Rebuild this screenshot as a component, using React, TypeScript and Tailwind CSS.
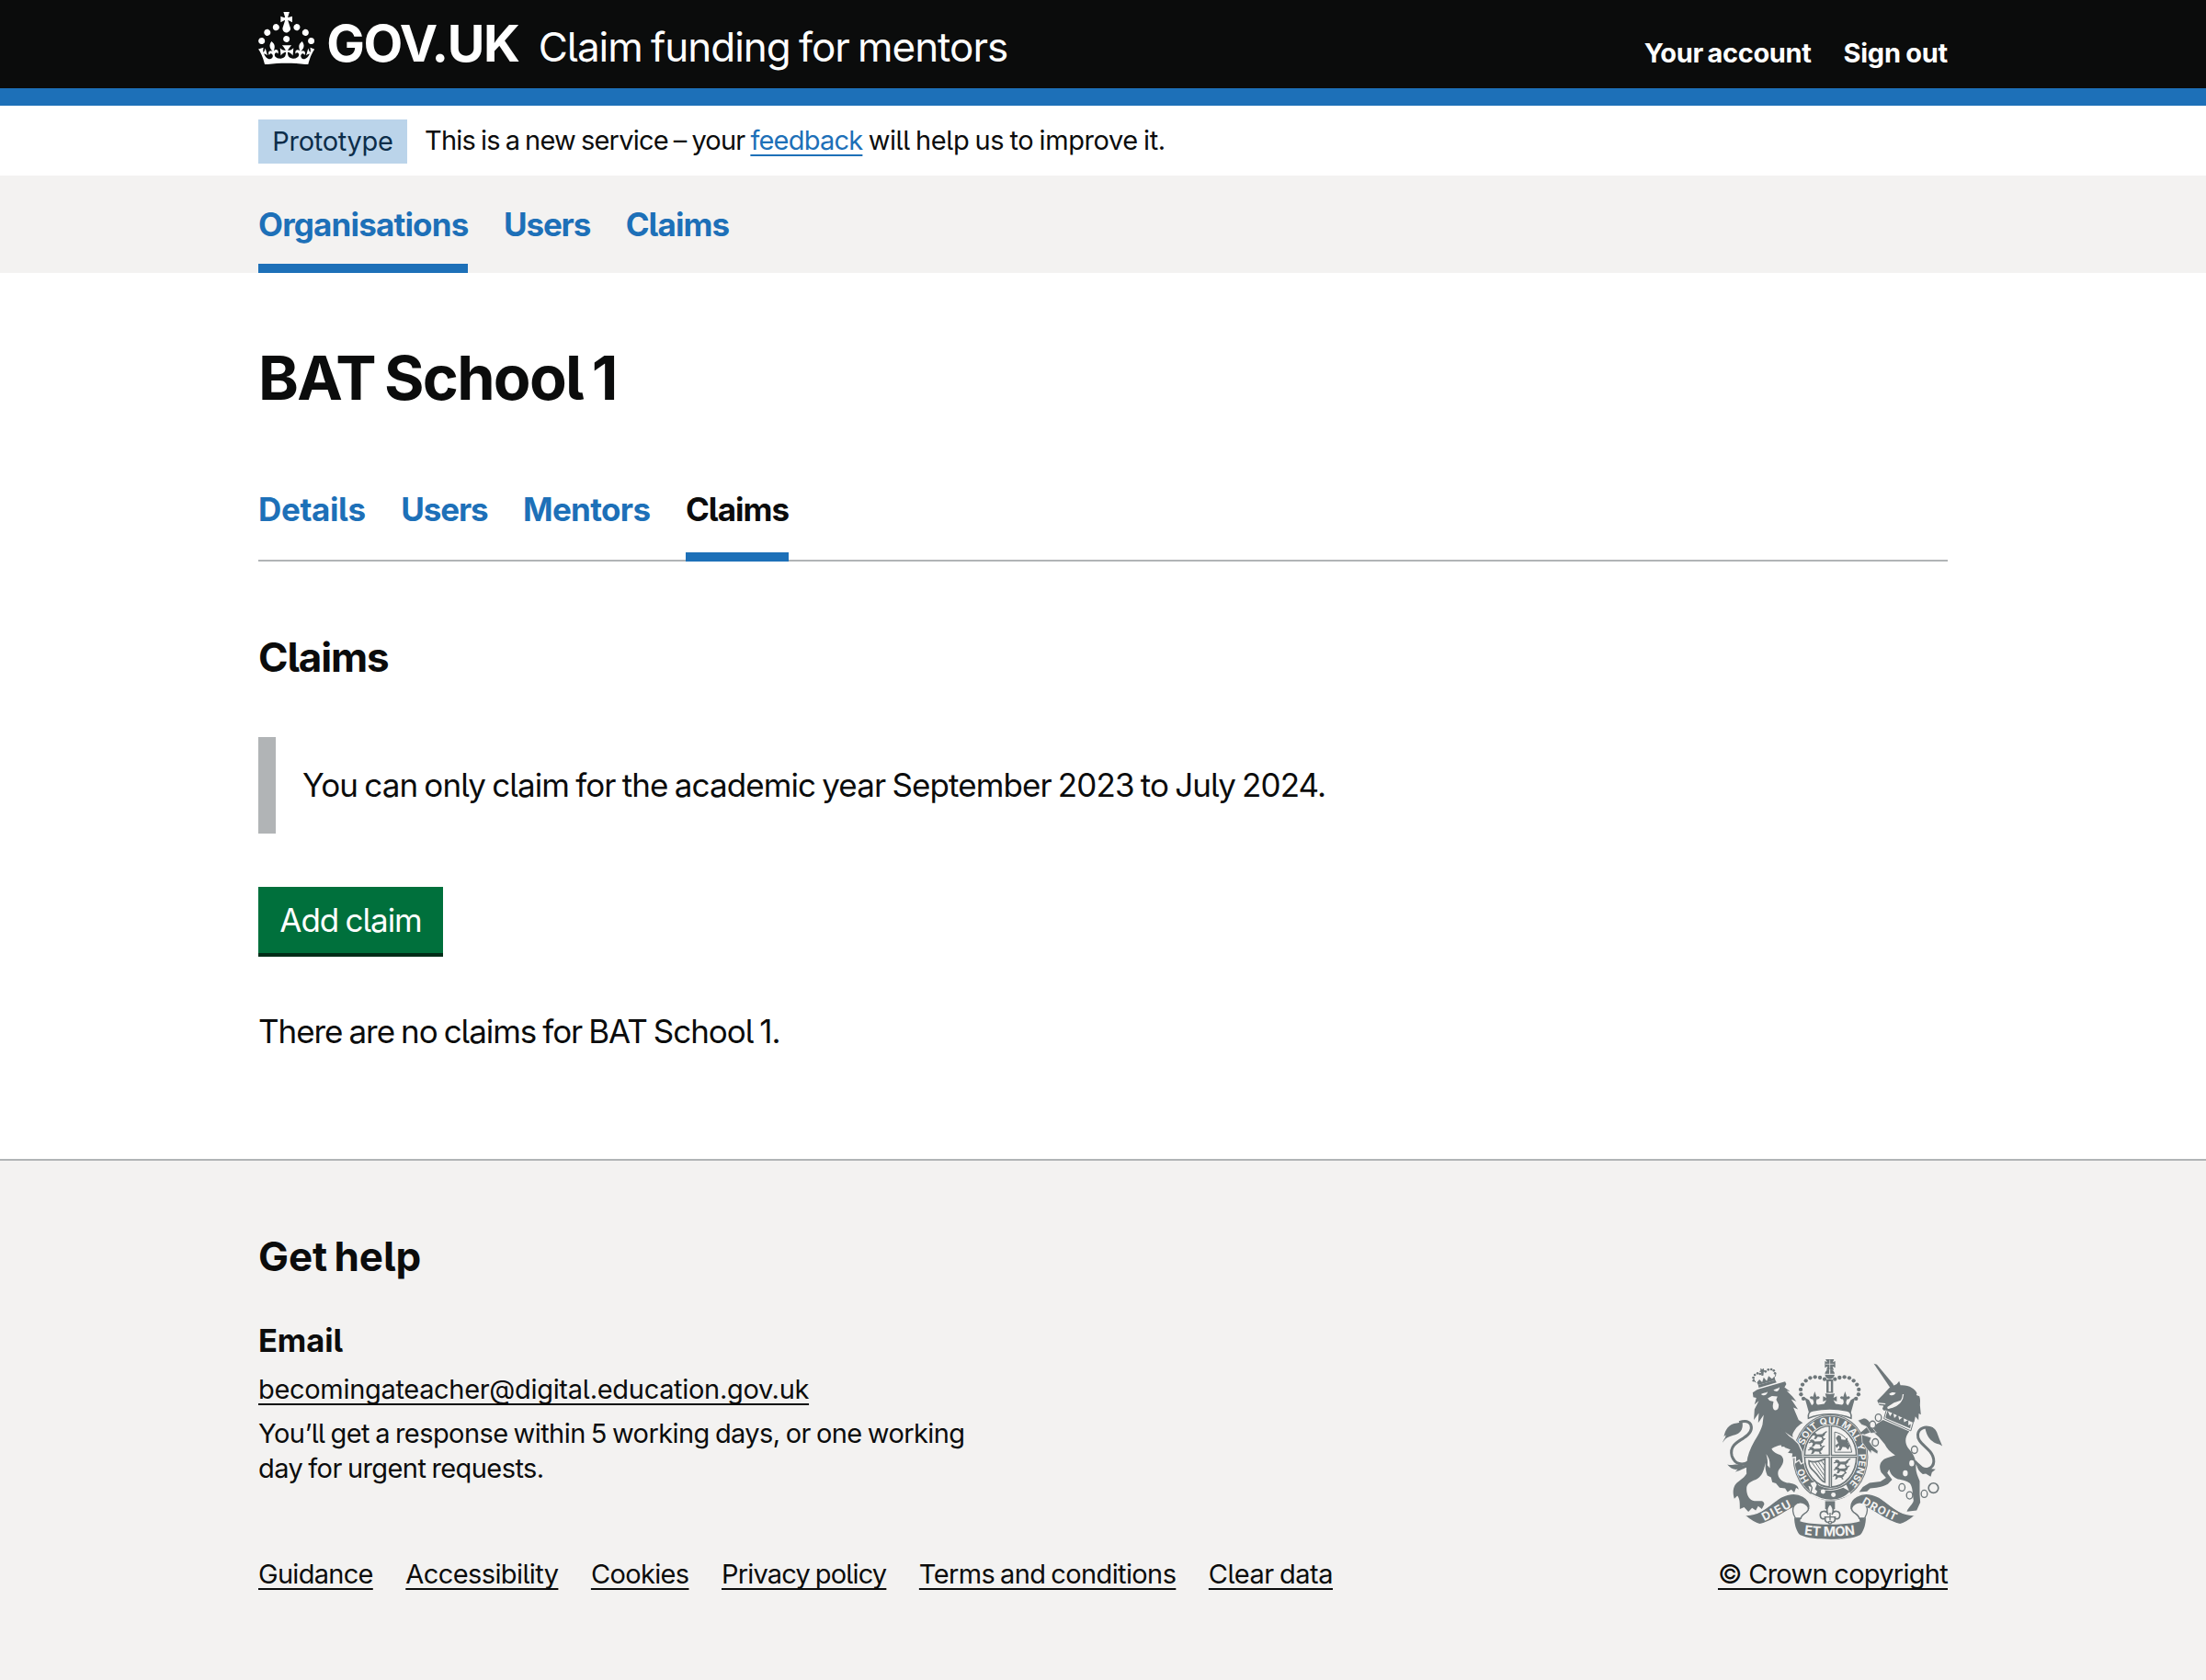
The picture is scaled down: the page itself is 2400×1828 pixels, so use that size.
import React from 'react';

const font = "font-['Inter','Liberation_Sans',sans-serif] [font-feature-settings:'cv05'_1]";
const underline = 'underline decoration-2 underline-offset-[5px] [text-decoration-skip-ink:none]';

function Crown() {
  return (
    <svg viewBox="0 0 32 30" className="h-[57.4px] w-[61.3px] shrink-0" fill="currentColor" aria-hidden="true">
      <path d="M22.6 10.4c-1 .4-2-.1-2.4-1-.4-.9.1-2 1-2.4.9-.4 2 .1 2.4 1s-.1 2-1 2.4m-5.9 6.7c-.9.4-2-.1-2.4-1-.4-.9.1-2 1-2.4.9-.4 2 .1 2.4 1s-.1 2-1 2.4m10.8-3.7c-1 .4-2-.1-2.4-1-.4-.9.1-2 1-2.4.9-.4 2 .1 2.4 1s0 2-1 2.4m3.3 4.8c-1 .4-2-.1-2.4-1-.4-.9.1-2 1-2.4.9-.4 2 .1 2.4 1s-.1 2-1 2.4M17 4.7l2.3 1.2V2.5l-2.3.7-.2-.2.9-3h-3.4l.9 3-.2.2c-.1.1-2.3-.7-2.3-.7v3.4L15 4.7c.1.1.1.2.2.2l-1.3 4c-.1.2-.1.4-.1.6 0 1.1.8 2 1.9 2.2h.7c1-.2 1.9-1.1 1.9-2.1 0-.2 0-.4-.1-.6l-1.3-4c-.1-.2 0-.2.1-.3m-7.6 5.7c.9.4 2-.1 2.4-1 .4-.9-.1-2-1-2.4-.9-.4-2 .1-2.4 1s0 2 1 2.4m-5 3c.9.4 2-.1 2.4-1 .4-.9-.1-2-1-2.4-.9-.4-2 .1-2.4 1s.1 2 1 2.4m-3.2 4.8c.9.4 2-.1 2.4-1 .4-.9-.1-2-1-2.4-.9-.4-2 .1-2.4 1s0 2 1 2.4m14.8 11c4.4 0 8.6.3 12.3.8 1.1-4.5 2.4-7 3.7-8.8l-2.5-.9c.2 1.3.3 1.9 0 2.7-.4-.4-.8-1.1-1.1-2.3l-1.2 4c.7-.5 1.3-.8 2-.9-1.1 2.5-2.6 3.1-3.5 3-1.1-.2-1.7-1.2-1.5-2.1.3-1.2 1.5-1.5 2.1-.1 1.1-2.3-.8-3-2-2.3 1.9-1.9 2.1-3.5.6-5.6-2.1 1.6-2.1 3.2-1.2 5.5-1.2-1.4-3.2-.6-2.5 1.6.9-1.4 2.1-.5 1.9.8-.2 1.1-1.7 2.1-3.5 1.9-2.7-.2-2.9-2.1-2.9-3.6.7-.1 1.9.5 2.9 1.9l.4-4.3c-1.1 1.1-2.1 1.4-3.2 1.4.4-1.2 2.1-3 2.1-3h-5.4s1.7 1.9 2.1 3c-1.1 0-2.1-.2-3.2-1.4l.4 4.3c1-1.4 2.2-2 2.9-1.9-.1 1.5-.2 3.4-2.9 3.6-1.9.2-3.4-.8-3.5-1.9-.2-1.3 1-2.2 1.9-.8.7-2.3-1.2-3-2.5-1.6.9-2.2.9-3.9-1.2-5.5-1.5 2-1.3 3.7.6 5.6-1.2-.7-3.1 0-2 2.3.6-1.4 1.8-1.1 2.1.1.2.9-.3 1.9-1.5 2.1-.9.2-2.4-.5-3.5-3 .6 0 1.2.3 2 .9l-1.2-4c-.3 1.1-.7 1.9-1.1 2.3-.3-.8-.2-1.4 0-2.7l-2.9.9C1.3 23 2.6 25.5 3.7 30c3.7-.5 7.9-.8 12.3-.8" />
    </svg>
  );
}

const INK = '#6e777a';
const PAPER = '#f3f2f1';

const archDots: [number, number][] = [
  [405, 123], [390, 118], [374, 116], [358, 119], [344, 128], [333, 141], [327, 157], [328, 173], [336, 187],
];

function Passant({ y }: { y: number }) {
  return (
    <g transform={`translate(0 ${y})`}>
      <path d="M2 6l6-5 7 2 4 5 18-1 8-6 4-3 3 3-4 3-3 8-6 4 5 8-7 1-2-7-13-2-6 8-8 1 3-5 2-7-5-2-7 3-3-3 7-3z" />
      <path d="M40 6c6-2 8-8 14-7" fill="none" stroke={INK} strokeWidth="3" />
    </g>
  );
}

function CoatOfArms({ className }: { className: string }) {
  return (
    <svg viewBox="57 55 750 595" className={className} fill={INK} aria-hidden="true">
      <defs>
        <path id="motto-ring" d="M373 473A93 111 0 1 1 476 473" />
        <path id="motto-left" d="M208 588L300 540" />
        <path id="motto-mid" d="M338 631Q424 643 510 630" />
        <path id="motto-right" d="M525 530Q560 552 646 592" />
      </defs>

      {/* lion */}
      <path d="M188 142l56-16 4 8-58 17z" />
      <path d="M184 134l8-10 9 9 5-16 10 12 6-16 11 9 8-8 3 12-56 16z" />
      <path d="M180 134c-6-6-8-12-6-18M242 116c4-4 4-10 0-16" fill="none" stroke={INK} strokeWidth="3" />
      {[[173, 128], [172, 118], [177, 109], [186, 104], [194, 106], [212, 98], [221, 92], [231, 91], [239, 95], [243, 104]].map(([x, y]) => (
        <circle key={`${x}-${y}`} cx={x} cy={y} r="4" />
      ))}
      <path d="M195 87l6 4 5-4 1 6 5 3-6 3-1 12-6 1-2-12-6-2 5-3z" />
      <path d="M170 167L184 158L192 155L276 131L280 139L274 150L292 163L281 161L300 180L313 196L296 189L318 222L303 216L320 256L334 266C317 274 305 290 300 305L306 345C286 338 262 334 240 346L232 350C236 362 250 366 262 372C280 388 264 408 254 422C248 442 262 456 282 462C300 462 320 468 320 484L312 478L306 494L296 484L284 492L276 480L258 478L246 464L234 460L230 444L218 438C212 424 210 412 213 396L208 412C204 430 196 444 180 452C162 458 150 466 150 482C150 502 158 516 170 520C186 526 206 514 208 532L200 548L188 538L180 552L168 544L156 557L142 542L128 548C128 526 128 514 120 504L110 514C104 494 106 482 112 470C118 458 140 450 150 432C148 400 152 372 166 344C180 316 194 300 202 272L206 240L188 266L190 234L174 256L176 222L190 194L176 206L182 184L172 182Z" />
      <path d="M214 368c10 12 14 26 12 46l-8-10c2-12 0-24-4-36z" fill={PAPER} />
      <path d="M197 172c10-5 16-3 22-8-2 12-14 16-22 8zM238 159c6-5 14-4 20-10-1 13-10 19-20 10z" fill={PAPER} />
      <path d="M219 186l14-8 18 2-4 10 8 16c1 11-3 19-10 19s-10-7-9-17l2-12-13-3z" fill={PAPER} />
      <path d="M156 394c-20 12-44 8-54-20-8-30 14-44 38-58 22-14 30-28 24-44-6-12-20-14-38-8" fill="none" stroke={INK} strokeWidth="9" />
      <path d="M72 331c2-12 10-14 10-26l-6 6c4-22 16-42 42-44l18-4c4 20-4 34-18 40-14 6-36 6-46 28z" />
      <path d="M87 402c12 4 20 0 32 0l22 2 12-10v18c-14 2-20 10-40 14l8-8c-14 2-24-4-34-16z" />

      {/* royal crown */}
      <path d="M408 58h28l-4 10 8-4v22l-9-5 4 12h-24l4-12-9 5V64l8 4z" />
      <path d="M422 60v30M408 74h28" stroke={PAPER} strokeWidth="2" fill="none" />
      <circle cx="422" cy="107" r="16" />
      <path d="M404 107h36M422 91v16" stroke={PAPER} strokeWidth="3" />
      <path d="M411 124h22v44h-22z" />
      <path d="M422 130v34" stroke={PAPER} strokeWidth="7" />
      {archDots.map(([x, y]) => (
        <g key={`${x}-${y}`}>
          <circle cx={x} cy={y} r="6.5" />
          <circle cx={844 - x} cy={y} r="6.5" />
        </g>
      ))}
      <g id="crown-half">
        <path d="M423 172l-16-2 4 14-11-5v17l11-4-7 12-20 3c-7-2-8-10-4-19 4 2 9-1 9-6-3-4-7-4-10-1l-6-18-6 18c-3-3-8-3-10 1 0 5 5 8 9 6 5 9 5 18-3 20l-9-17-14-8 14 50c22-6 46-9 69-9z" />
      </g>
      <use href="#crown-half" transform="translate(845 0) scale(-1 1)" />

      {/* garter */}
      <ellipse cx="424.500" cy="379" rx="123" ry="141" />
      <ellipse cx="424.500" cy="379" rx="119" ry="137" fill="none" stroke={PAPER} strokeWidth="2" />
      <ellipse cx="424.500" cy="376" rx="90" ry="105" fill={PAPER} />
      <ellipse cx="424.500" cy="376" rx="85" ry="100" fill="none" stroke={INK} strokeWidth="5" />
      <path d="M352 251c-2-16 4-23 14-25 38-8 74-8 112 0 10 2 16 9 14 25-42-18-98-18-140 0z" fill={PAPER} stroke={INK} strokeWidth="4.500" />
      <path d="M424 276v200M339 375h171" stroke={INK} strokeWidth="11" />
      <path d="M424 276v200M339 375h171" stroke={PAPER} strokeWidth="2.500" />
      <g transform="translate(362 296) scale(.95)"><Passant y={0} /></g>
      <g transform="translate(354 319)"><Passant y={0} /></g>
      <g transform="translate(352 343)"><Passant y={0} /></g>
      <g transform="translate(436 385)"><Passant y={0} /></g>
      <g transform="translate(436 408) scale(.95)"><Passant y={0} /></g>
      <g transform="translate(432 431) scale(.8)"><Passant y={0} /></g>
      <path d="M438 296c26 4 50 26 56 66h-56z" fill="none" stroke={INK} strokeWidth="3" />
      <path d="M442 316l8-10 8 4 2 10 12 2 8-8 0 14 8 14-6 12-8-8-10-2-6 12-12 0 8-8-2-8-8 8-4-8 10-8z" />
      <path d="M354 390c12 6 34 2 52-6v76c-12-2-20-20-30-30-12-12-24-20-22-40z" fill="none" stroke={INK} strokeWidth="5" />
      <path d="M364 396l40 56M374 394l30 44M384 392l20 30M394 390l10 14" stroke={INK} strokeWidth="3" />
      <g fill={PAPER} fontFamily="Inter, sans-serif" fontWeight="700" fontSize="31">
        <text><textPath href="#motto-ring" startOffset="26" textLength="46" lengthAdjust="spacing">HO</textPath></text>
        <text><textPath href="#motto-ring" startOffset="146" textLength="372" lengthAdjust="spacing">SOIT QUI MAL Y PENSE</textPath></text>
      </g>
      <path d="M352 472c40 18 88 20 124-4l14 32c-40 24-92 26-128 2z" fill={PAPER} />
      <path d="M366 474c32 16 70 18 100 4l22 12c-30 34-84 36-124 6z" />
      <path d="M356 462l18-6 8 12-6 14 8 8-8 12-16-8 4-16z" fill={PAPER} stroke={INK} strokeWidth="4" />
      <circle cx="400" cy="491" r="7.500" fill={PAPER} />
      <circle cx="434" cy="501" r="7.500" fill={PAPER} />

      {/* lion's forearm over the garter */}
      <path d="M278 300l26 18 16 16 12 26 4 36-8 4-6-12-12 8 0-18-14 2 2-12-16-2 8-12-18-6 4-48z" stroke={PAPER} strokeWidth="4" />
      <path d="M262 282l20 20 16 18-4 22-30 2z" />

      {/* pendant */}
      <path d="M407 522h32v26h-32z" />
      <path d="M423 530c12 12 13 24 6 36 6-16 28-14 26 4-1 10-10 12-16 8 2 12-6 14-16 14s-18-2-16-14c-6 4-15 2-16-8-2-18 20-20 26-4-7-12-6-24 6-36z" fill={PAPER} stroke={INK} strokeWidth="5" />
      <path d="M404 574h38M423 560v24" stroke={INK} strokeWidth="4" />
      <circle cx="423" cy="592" r="4.500" fill={PAPER} stroke={INK} strokeWidth="4" />

      {/* unicorn */}
      <path d="M566 72l10 3 52 63 8 14-12 6z" />
      <path d="M577 193l22-22 18-20 24-12 8-10 4 14c28-2 48 12 54 26l-2 6 10 4c4 12 2 20 2 30l3 30-7-4-1 22-10-12-4 18-12 3-76-30-2-14 18-8c14-4 26-12 30-22l-24 8-22 14 2 8-12 4-6-6 4-10-14-2z" />
      <path d="M616 172c6-7 16-7 22-4-4 8-16 11-22 4z" fill={PAPER} />
      <path d="M582 202l22 2M612 218c24-4 48-14 50-46" stroke={PAPER} strokeWidth="4" fill="none" />
      <path d="M607 224l88 40-8 28-88-40z" fill={PAPER} stroke={INK} strokeWidth="3" />
      <path d="M605 244l6-18 8 18 10-14 4 20 12-12 4 18 14-10 2 18 14-8 0 18 8-4-2 14-80-34z" />
      <path d="M596 256L682 294C668 312 666 330 678 348C696 368 704 384 704 406C702 424 708 438 716 456L716 500L718 526L706 552L674 556C680 540 694 532 696 520C692 496 694 478 684 464C666 450 646 454 636 446C624 438 620 430 616 418L610 430L626 452L612 466C592 478 572 478 554 480L544 490L518 492L530 476L552 462L588 458L606 446L590 428C580 408 588 386 610 380L636 372C620 362 608 350 602 336L582 312L562 294L536 304L520 300L544 280L572 272Z" />
      <path d="M514 258l20-8c12 2 20 12 24 28l16 20-18 2-14-22-16-6zM526 304l32 10-6 14 12 16 16 14-2 10-20-12 0 10-14-14-16-22z" stroke={PAPER} strokeWidth="2" />
      <path d="M700 392c16 16 28 30 44 24 24-8 22-36 6-56-22-24-42-34-40-56 2-20 24-30 48-18" fill="none" stroke={INK} strokeWidth="9" />
      <path d="M734 284c14-10 30-6 38 12l8 22 10 24c-12-10-22-6-32-16-14-10-20-24-24-42z" />
      <path d="M704 400c8 14 20 16 34 14l30 4-12 10-4 14-16-10-10 2c-12-8-18-20-22-34z" />
      {[[581, 249], [562, 272], [571, 330], [699, 354], [658, 477], [683, 503], [731, 498]].map(([x, y]) => (
        <ellipse key={`${x}-${y}`} cx={x} cy={y} rx="10" ry="12" fill={PAPER} stroke={INK} strokeWidth="4" />
      ))}
      <circle cx="761" cy="479" r="16" fill="none" stroke={INK} strokeWidth="5" />
      <ellipse cx="690" cy="398" rx="8" ry="10" fill={PAPER} />
      <ellipse cx="669" cy="431" rx="8" ry="10" fill={PAPER} />

      {/* ribbons */}
      <path d="M143 568c46 0 70-22 108-52 28-20 60-24 84-10 18 10 24 26 22 40-4 20-30 22-30 42l-14 6c-6-24-18-40-8-52-42 20-66 46-112 56-20-6-36-18-50-30z" stroke={PAPER} strokeWidth="4" />
      <path d="M702 568c-46 0-70-22-108-52-28-20-60-24-84-10-18 10-24 26-22 40 4 20 30 22 30 42l14 6c6-24 18-40 8-52 42 20 66 46 112 56 20-6 36-18 50-30z" stroke={PAPER} strokeWidth="4" />
      <path d="M306 536c8-10 22-12 34-6 14 8 16 20 6 28-10 6-18 10-18 20l-18 0c-8-14-14-28-4-42z" fill={PAPER} stroke={INK} strokeWidth="4" />
      <path d="M540 536c-8-10-22-12-34-6-14 8-16 20-6 28 10 6 18 10 18 20l18 0c8-14 14-28 4-42z" fill={PAPER} stroke={INK} strokeWidth="4" />
      <path d="M306 574c8 18 60 24 117 24s109-6 117-24c0 22-6 44-18 58-26 14-60 14-99 14s-73-2-99-14c-12-14-18-36-18-58z" />
      <g fill={PAPER} fontFamily="Inter, sans-serif" fontWeight="700">
        <text fontSize="38"><textPath href="#motto-left" textLength="102" lengthAdjust="spacing">DIEU</textPath></text>
        <text fontSize="43"><textPath href="#motto-mid" textLength="168" lengthAdjust="spacing">ET MON</textPath></text>
        <text fontSize="36"><textPath href="#motto-right" textLength="124" lengthAdjust="spacing">DROIT</textPath></text>
      </g>
    </svg>
  );
}

const footerLinks = [
  { label: 'Guidance', style: 'tracking-[-0.0245em]' },
  { label: 'Accessibility', style: 'tracking-[-0.0205em]' },
  { label: 'Cookies', style: 'tracking-[-0.0223em]' },
  { label: 'Privacy policy', style: 'tracking-[-0.0275em] [word-spacing:-0.06em]' },
  { label: 'Terms and conditions', style: 'tracking-[-0.021em] [word-spacing:-0.06em]' },
  { label: 'Clear data', style: 'tracking-[-0.016em] [word-spacing:-0.05em]' },
];

export default function App() {
  return (
    <div className={`flex min-h-[1828px] w-full flex-col bg-white text-[#0b0c0c] antialiased ${font}`}>
      <header className="h-[115px] border-b-[19px] border-[#1d70b8] bg-[#0b0c0c] text-white">
        <div className="mx-auto flex h-[96px] w-[1838px] items-start">
          <div className="flex items-start pt-[13px]"><Crown /></div>
          <span className="ml-[13px] mt-[17px] text-[55.500px] leading-[60px] font-bold tracking-[-0.024em]">GOV.UK</span>
          <span className="ml-[21px] mt-[21px] text-[44px] leading-[60px] tracking-[-0.023em] [word-spacing:-0.05em]">Claim funding for mentors</span>
          <nav className="ml-auto flex gap-[35px] pt-[38px] text-[29px] leading-[40px] font-bold">
            <a className="tracking-[-0.013em] [word-spacing:-0.06em]">Your account</a>
            <a className="tracking-[-0.008em] [word-spacing:-0.04em]">Sign out</a>
          </nav>
        </div>
      </header>

      <div className="mx-auto flex h-[76px] w-[1838px] items-start pt-[15px]">
        <strong className="flex h-[48px] w-[162px] items-center justify-center bg-[#bbd4ea] pb-px text-[29px] font-normal tracking-[-0.01em] text-[#0c2d4a]">Prototype</strong>
        <span className="ml-[19px] text-[29px] leading-[46px] whitespace-pre [word-spacing:-0.05em]">
          <span className="tracking-[-0.027em]">This is a new service – your </span>
          <a className={`tracking-[-0.027em] text-[#1d70b8] ${underline}`}>feedback</a>
          <span className="tracking-[-0.014em]"> will help us to improve it.</span>
        </span>
      </div>

      <div className="h-[106px] bg-[#f3f2f1]">
        <nav className="mx-auto flex h-full w-[1838px] gap-[38.500px] text-[35px] font-bold text-[#1d70b8]">
          <a className="flex items-center border-b-[10px] border-[#1d70b8] pt-[10px] tracking-[-0.0235em]">Organisations</a>
          <a className="flex items-center tracking-[-0.033em]">Users</a>
          <a className="flex items-center tracking-[-0.026em]">Claims</a>
        </nav>
      </div>

      <main className="mx-auto w-[1838px] pt-[70px]">
        <h1 className="text-[66.500px] leading-[89px] font-bold tracking-[-0.026em] [word-spacing:-0.06em]">BAT School 1</h1>
        <nav className="mt-[41px] flex h-[114px] gap-[38.500px] border-b-2 border-[#b1b4b6] text-[35px] font-bold text-[#1d70b8]">
          <a className="flex items-center pt-[2px] tracking-[-0.0105em]">Details</a>
          <a className="flex items-center pt-[2px] tracking-[-0.033em]">Users</a>
          <a className="flex items-center pt-[2px] tracking-[-0.0187em]">Mentors</a>
          <a className="-mb-[2px] flex items-center border-b-[10px] border-[#1d70b8] pt-[10px] tracking-[-0.028em] text-[#0b0c0c]">Claims</a>
        </nav>
        <h2 className="mt-[74px] text-[44px] leading-[60px] font-bold tracking-[-0.026em]">Claims</h2>
        <div className="mt-[57px] flex h-[105px] items-center border-l-[19px] border-[#b1b4b6] pl-[29px] text-[35px] tracking-[-0.026em] [word-spacing:-0.05em]">You can only claim for the academic year September 2023 to July 2024.</div>
        <button className="mt-[58px] block h-[72px] w-[201px] bg-[#00703c] text-[35px] tracking-[-0.03em] text-white shadow-[0_4px_0_#002d18] [word-spacing:-0.04em]">Add claim</button>
        <p className="mt-[60px] text-[35px] leading-[51px] tracking-[-0.03em] [word-spacing:-0.05em]">There are no claims for BAT School 1.</p>
      </main>

      <footer className="mt-[113px] flex-1 border-t-2 border-[#b1b4b6] bg-[#f3f2f1] pt-[74px]">
        <div className="mx-auto flex w-[1838px] items-end justify-between">
          <div>
            <h2 className="text-[44px] leading-[60px] font-bold tracking-[-0.003em] [word-spacing:-0.06em]">Get help</h2>
            <h3 className="mt-[42px] text-[34.500px] leading-[40px] font-bold tracking-[-0.003em]">Email</h3>
            <p className="mt-[14px] text-[29px] leading-[38px] tracking-[-0.011em]"><a className={underline}>becomingateacher@digital.education.gov.uk</a></p>
            <p className="mt-[10px] text-[29px] leading-[38px] tracking-[-0.02em] [word-spacing:-0.05em]">
              You’ll get a response within 5 working days, or one working<br />day for urgent requests.
            </p>
            <ul className="mt-[77px] flex gap-[35.500px] text-[29px] leading-[38px]">
              {footerLinks.map((l) => (
                <li key={l.label} className={l.style}><a className={underline}>{l.label}</a></li>
              ))}
            </ul>
          </div>
          <div className="flex w-[250px] flex-col items-end">
            <CoatOfArms className="h-[198px] w-[250px]" />
            <a className={`mt-[18px] text-[29px] leading-[38px] whitespace-nowrap tracking-[-0.0252em] ${underline}`}>© Crown copyright</a>
          </div>
        </div>
      </footer>
    </div>
  );
}
